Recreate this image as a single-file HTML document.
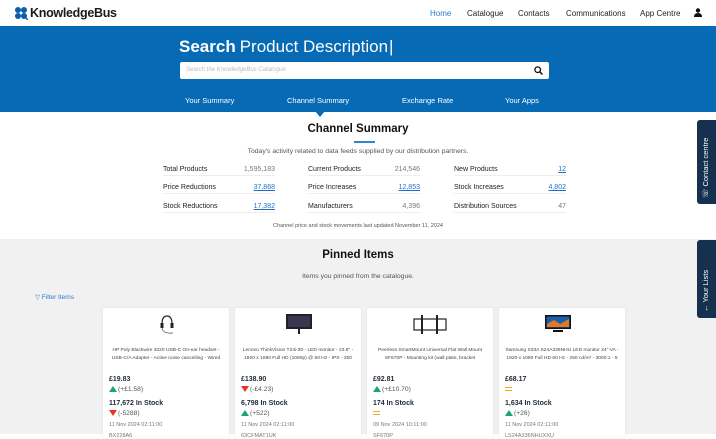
<!DOCTYPE html>
<html><head><meta charset="utf-8"><style>
*{margin:0;padding:0;box-sizing:border-box}
body{width:716px;height:434px;overflow:hidden;font-family:"Liberation Sans",sans-serif;background:#fff;position:relative;color:#222}
.nav{height:26px;position:relative;background:#fff}
.logo{position:absolute;left:14px;top:6px;font-size:12.5px;font-weight:bold;color:#1a1a1a;letter-spacing:-.3px}
.logo .ic{display:inline-block;width:14px;height:14px;vertical-align:-3px;margin-right:2px}
.menu{position:absolute;top:9px;font-size:8px;color:#222}
.blue{position:absolute;top:26px;left:0;width:716px;height:86px;background:#066ab5}
.title{position:absolute;left:179px;top:37px;color:#fff;font-size:17px}
.title b{font-weight:bold}
.title span{font-weight:300;margin-left:4px}
.search{position:absolute;left:180px;top:62px;width:369px;height:17px;background:#fff;border-radius:2px;font-size:6px;font-style:italic;color:#bbb;padding:5px 6px}
.tab{position:absolute;top:96px;color:#fff;font-size:7.5px}
.tri{position:absolute;left:315px;top:111px;width:0;height:0;border-left:5px solid transparent;border-right:5px solid transparent;border-top:6px solid #066ab5}
h2{position:absolute;width:100%;text-align:center;font-size:11.5px;font-weight:bold;color:#111}
.ul{position:absolute;left:354px;top:141px;width:21px;height:1.5px;background:#2f88cc}
.sub{position:absolute;width:100%;text-align:center;font-size:6.8px;color:#555}
.row{position:absolute;font-size:7px;color:#222;border-bottom:1px solid #eee;height:10px;width:112px}
.row i{position:absolute;right:0;top:0;font-style:normal;color:#777}
.row i.l{color:#1f6fd1;text-decoration:underline}
.gray{position:absolute;top:239px;left:0;width:716px;height:195px;background:#f1f1f1}
.card{position:absolute;top:308px;width:126px;height:130px;background:#fff;border-radius:2px;box-shadow:0 0 2px rgba(0,0,0,.08)}
.card .d{position:absolute;top:39px;left:3px;right:3px;text-align:center;font-size:4.9px;color:#444;line-height:8px}
.card .p{position:absolute;left:6px;font-size:7px;font-weight:bold;color:#1e2a3a}
.card .c{position:absolute;left:6px;font-size:6.7px;color:#555}
.card .t{position:absolute;left:6px;font-size:5.5px;color:#777}
.up{display:inline-block;width:0;height:0;border-left:4px solid transparent;border-right:4px solid transparent;border-bottom:6px solid #18a37a;vertical-align:-1px;margin-right:1px}
.dn{display:inline-block;width:0;height:0;border-left:4px solid transparent;border-right:4px solid transparent;border-top:6px solid #e8332a;vertical-align:-1px;margin-right:1px}
.eq{display:inline-block;width:7px;height:4px;border-top:1.5px solid #f5a623;border-bottom:1.5px solid #f5a623}
.side{position:absolute;left:697px;width:19px;background:#15314f;border-radius:3px 0 0 3px;color:#fff}
.side span{position:absolute;left:4px;white-space:nowrap;transform:rotate(-90deg);transform-origin:left top;font-size:7.5px}
</style></head><body>
<div class="nav">
 <div class="logo"><svg class="ic" viewBox="0 0 14 14"><circle cx="4" cy="4" r="3" fill="#0b5ea8"/><circle cx="10" cy="4" r="3" fill="#0b5ea8"/><circle cx="4" cy="10" r="3" fill="#0b5ea8"/><circle cx="10" cy="10" r="3" fill="#0b5ea8"/><line x1="11" y1="11" x2="14" y2="14" stroke="#0b5ea8" stroke-width="1.5"/></svg>KnowledgeBus</div>
 <div class="menu" style="left:430px;color:#2a7cc7">Home</div>
 <div class="menu" style="left:467px">Catalogue</div>
 <div class="menu" style="left:518px">Contacts</div>
 <div class="menu" style="left:566px">Communications</div>
 <div class="menu" style="left:640px">App Centre</div>
 <svg style="position:absolute;left:694px;top:8px" width="8" height="9" viewBox="0 0 8 9"><circle cx="4" cy="2.5" r="2.2" fill="#111"/><path d="M0 9 Q0 5 4 5 Q8 5 8 9Z" fill="#111"/></svg>
</div>
<div class="blue"></div>
<div class="title"><b>Search</b><span>Product Description</span><span style="font-weight:100;margin-left:1px">|</span></div>
<div class="search">Search the KnowledgeBus Catalogue
 <svg style="position:absolute;right:6px;top:4px" width="9" height="9" viewBox="0 0 9 9"><circle cx="3.7" cy="3.7" r="2.8" fill="none" stroke="#111" stroke-width="1.3"/><line x1="5.8" y1="5.8" x2="8.5" y2="8.5" stroke="#111" stroke-width="1.5"/></svg></div>
<div class="tab" style="left:185px">Your Summary</div>
<div class="tab" style="left:287px">Channel Summary</div>
<div class="tab" style="left:402px">Exchange Rate</div>
<div class="tab" style="left:505px">Your Apps</div>
<div class="tri"></div>
<h2 style="top:123px">Channel Summary</h2>
<div class="ul"></div>
<div class="sub" style="top:148px">Today's activity related to data feeds supplied by our distribution partners.</div>
<div class="row" style="left:163px;top:166px">Total Products<i>1,595,183</i></div>
<div class="row" style="left:308px;top:166px">Current Products<i>214,546</i></div>
<div class="row" style="left:454px;top:166px">New Products<i class="l">12</i></div>
<div class="row" style="left:163px;top:184px">Price Reductions<i class="l">37,868</i></div>
<div class="row" style="left:308px;top:184px">Price Increases<i class="l">12,853</i></div>
<div class="row" style="left:454px;top:184px">Stock Increases<i class="l">4,802</i></div>
<div class="row" style="left:163px;top:203px">Stock Reductions<i class="l">17,382</i></div>
<div class="row" style="left:308px;top:203px">Manufacturers<i>4,396</i></div>
<div class="row" style="left:454px;top:203px">Distribution Sources<i>47</i></div>
<div class="sub" style="top:223px;font-size:5.5px">Channel price and stock movements last updated November 11, 2024</div>
<div class="gray"></div>
<h2 style="top:249px">Pinned Items</h2>
<div class="sub" style="top:273px">Items you pinned from the catalogue.</div>
<div style="position:absolute;left:35px;top:293px;font-size:6.5px;color:#2a7cc7">&#9661; Filter Items</div>

<div class="card" style="left:103px">
 <svg style="position:absolute;left:56px;top:6px" width="16" height="22" viewBox="0 0 16 22"><path d="M3 10 Q3 2 8 2 Q13 2 13 10" fill="none" stroke="#222" stroke-width="1.2"/><rect x="1.5" y="9" width="3" height="5" fill="#222"/><rect x="11.5" y="9" width="3" height="5" fill="#222"/><path d="M3 14 Q4 20 14 19" fill="none" stroke="#444" stroke-width=".7"/></svg>
 <div class="d">HP Poly Blackwire 3220 USB-C On-ear headset - USB-C/A Adapter - Active noise cancelling - Wired</div>
 <div class="p" style="top:68px">£19.83</div><div class="c" style="top:78px"><span class="up"></span>(+£1.58)</div>
 <div class="p" style="top:92px">117,672 In Stock</div><div class="c" style="top:102px"><span class="dn"></span>(-5288)</div>
 <div class="t" style="top:114px">11 Nov 2024 02:11:00</div><div class="t" style="top:125px">BX228A6</div>
</div>
<div class="card" style="left:235px">
 <svg style="position:absolute;left:50px;top:5px" width="28" height="22" viewBox="0 0 28 22"><rect x="1" y="1" width="26" height="15" fill="#222"/><rect x="3" y="3" width="22" height="11" fill="#3a3550"/><rect x="13" y="16" width="2" height="5" fill="#222"/></svg>
 <div class="d">Lenovo ThinkVision T24i-30 - LED monitor - 23.8" - 1920 x 1080 Full HD (1080p) @ 60 Hz - IPS - 250</div>
 <div class="p" style="top:68px">£138.90</div><div class="c" style="top:78px"><span class="dn"></span>(-£4.23)</div>
 <div class="p" style="top:92px">6,798 In Stock</div><div class="c" style="top:102px"><span class="up"></span>(+522)</div>
 <div class="t" style="top:114px">11 Nov 2024 02:11:00</div><div class="t" style="top:125px">63CFMAT1UK</div>
</div>
<div class="card" style="left:367px">
 <svg style="position:absolute;left:45px;top:6px" width="36" height="22" viewBox="0 0 36 22"><rect x="2" y="5" width="32" height="11" fill="none" stroke="#222" stroke-width="1.2"/><rect x="9" y="1" width="2" height="19" fill="#222"/><rect x="24" y="1" width="2" height="19" fill="#222"/></svg>
 <div class="d">Peerless SmartMount Universal Flat Wall Mount SF670P - Mounting kit (wall plate, bracket</div>
 <div class="p" style="top:68px">£92.81</div><div class="c" style="top:78px"><span class="up"></span>(+£10.70)</div>
 <div class="p" style="top:92px">174 In Stock</div><div class="c" style="top:102px"><span class="eq"></span></div>
 <div class="t" style="top:114px">09 Nov 2024 10:11:00</div><div class="t" style="top:125px">SF670P</div>
</div>
<div class="card" style="left:499px">
 <svg style="position:absolute;left:45px;top:6px" width="28" height="22" viewBox="0 0 28 22"><rect x="1" y="1" width="26" height="14" fill="#111"/><rect x="2.5" y="2.5" width="23" height="11" fill="#1a5fa8"/><path d="M3 10 L10 6 L16 10 L25 5 L25 13 L3 13Z" fill="#e07a2a"/><rect x="9" y="16" width="10" height="2" fill="#111"/></svg>
 <div class="d">Samsung S33A S24A336NHU LED monitor 24" VA - 1920 x 1080 Full HD 60 Hz - 250 cd/m² - 3000:1 - 5</div>
 <div class="p" style="top:68px">£68.17</div><div class="c" style="top:78px"><span class="eq"></span></div>
 <div class="p" style="top:92px">1,634 In Stock</div><div class="c" style="top:102px"><span class="up"></span>(+26)</div>
 <div class="t" style="top:114px">11 Nov 2024 02:11:00</div><div class="t" style="top:125px">LS24A336NHUXXU</div>
</div>

<div class="side" style="top:120px;height:84px"><span style="top:78px">&#9743; Contact centre</span></div>
<div class="side" style="top:240px;height:78px"><span style="top:72px">&#8592; Your Lists</span></div>
</body></html>
